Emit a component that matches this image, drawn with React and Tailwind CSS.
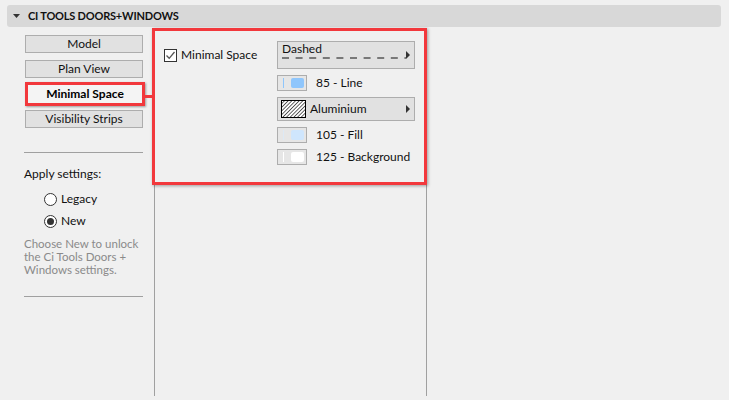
import React from 'react';

const font = { fontFamily: 'Lato, "Open Sans", Arial, sans-serif' };

const SideButton = ({ label, active }) =>
  active ? (
    <div className="h-[24px] w-[120px] -my-[3px] border-[3px] border-[#f2383c] bg-[#f4f4f4] shadow-[1px_1px_2px_rgba(0,0,0,0.35)] flex items-center justify-center text-[12px] font-bold text-black">
      {label}
    </div>
  ) : (
    <div className="h-[18px] w-[118px] border border-[#adadad] bg-[#e1e1e1] flex items-center justify-center text-[12px] text-[#111]">
      {label}
    </div>
  );

const Radio = ({ label, checked }) => (
  <div className="flex items-center h-[22px] pl-[44px]">
    <div className="w-[13px] h-[13px] rounded-full border border-[#333] bg-white flex items-center justify-center">
      {checked && <div className="w-[7px] h-[7px] rounded-full bg-[#333]" />}
    </div>
    <span className="ml-[4px] text-[12px] text-[#111]">{label}</span>
  </div>
);

const Swatch = ({ color, line, label }) => (
  <div className="flex items-center h-[16px]">
    <div className="w-[30px] h-[16px] border border-[#adadad] bg-[#e6e6e6] flex items-center">
      <div className="ml-[5px] w-[1px] h-[10px]" style={{ background: line }} />
      <div className="ml-[7px] w-[13px] h-[10px] rounded-[2px]" style={{ background: color }} />
    </div>
    <span className="ml-[9px] text-[12px] text-[#111]">{label}</span>
  </div>
);

const Arrow = () => (
  <svg width="4" height="8" viewBox="0 0 4 8" className="shrink-0">
    <path d="M0 0 L4 4 L0 8 Z" fill="#333" />
  </svg>
);

export default function App() {
  return (
    <div className="relative w-[729px] h-[400px] bg-[#f0f0f0] overflow-hidden" style={font}>
      {/* header */}
      <div className="ml-[7px] mt-[5px] w-[714px] h-[22px] rounded-[3px] bg-[#d8d8d8] flex items-center">
        <svg width="7" height="4" viewBox="0 0 7 4" className="ml-[6px]">
          <path d="M0 0 L7 0 L3.5 4 Z" fill="#333" />
        </svg>
        <span className="ml-[8px] text-[11px] tracking-[-0.2px] font-bold text-[#111]">CI TOOLS DOORS+WINDOWS</span>
      </div>

      <div className="flex mt-[5px] h-[364px]">
        {/* left column */}
        <div className="w-[154px] pt-[3px] pl-[25px] flex flex-col">
          <div className="flex flex-col gap-[7px]">
            <SideButton label="Model" />
            <SideButton label="Plan View" />
            <SideButton label="Minimal Space" active />
            <SideButton label="Visibility Strips" />
          </div>
          <div className="mt-[24px] -ml-[1px] w-[119px] h-[1px] bg-[#a0a0a0]" />
          <div className="mt-[13px] -ml-[1px] text-[12px] text-[#111] leading-[16px]">Apply settings:</div>
          <div className="mt-[6px] -ml-[25px]">
            <Radio label="Legacy" />
            <Radio label="New" checked />
          </div>
          <div className="mt-[5px] -ml-[1px] text-[11.5px] leading-[13px] text-[#8a8a8a]">
            <div>Choose New to unlock</div>
            <div>the Ci Tools Doors +</div>
            <div>Windows settings.</div>
          </div>
          <div className="mt-[20px] -ml-[1px] w-[119px] h-[1px] bg-[#a0a0a0]" />
        </div>

        {/* middle column */}
        <div className="w-[273px] border-x border-[#a0a0a0] flex pl-[9px] pt-[9px]">
          <div className="w-[113px] pt-[5px]">
            <div className="flex items-center">
              <div className="w-[13px] h-[13px] border border-[#333] bg-white flex items-center justify-center">
                <svg width="11" height="11" viewBox="0 0 11 11">
                  <path d="M1.5 5.5 L4.2 8.3 L9.5 2" fill="none" stroke="#555" strokeWidth="1.3" />
                </svg>
              </div>
              <span className="ml-[4px] text-[12px] text-[#111]">Minimal Space</span>
            </div>
          </div>
          <div className="w-[138px] flex flex-col gap-[6px]">
            <div className="h-[28px] border border-[#adadad] bg-[#e1e1e1] flex items-start pr-[4px]">
              <div className="flex-1 pl-[4px]">
                <div className="text-[12px] leading-[14px] text-[#111]">Dashed</div>
                <svg width="124" height="3" viewBox="0 0 124 3" className="mt-[1px] block">
                  <line x1="0" y1="1" x2="124" y2="1" stroke="#111" strokeWidth="1.2" strokeDasharray="7 6.6" />
                </svg>
              </div>
              <div className="self-center">
                <Arrow />
              </div>
            </div>
            <Swatch color="#8fc6fc" line="#8fc6fc" label="85 - Line" />
            <div className="h-[24px] border border-[#adadad] bg-[#e1e1e1] flex items-center pl-[3px] pr-[4px]">
              <svg width="25" height="18" viewBox="0 0 25 18" className="shrink-0">
                <defs>
                  <pattern id="hatch" width="2.6" height="2.6" patternUnits="userSpaceOnUse" patternTransform="rotate(45)">
                    <line x1="0" y1="0" x2="0" y2="2.6" stroke="#000" strokeWidth="1.2" />
                  </pattern>
                </defs>
                <rect x="0" y="0" width="25" height="18" fill="#fff" />
                <rect x="0" y="0" width="25" height="18" fill="url(#hatch)" />
                <rect x="0.5" y="0.5" width="24" height="17" fill="none" stroke="#000" />
              </svg>
              <span className="ml-[4px] flex-1 text-[12px] text-[#111]">Aluminium</span>
              <Arrow />
            </div>
            <Swatch color="#cfe6fd" line="#dde9f5" label="105 - Fill" />
            <Swatch color="#ffffff" line="#ffffff" label="125 - Background" />
          </div>
        </div>
      </div>

      {/* annotation overlay */}
      <div className="absolute left-[152px] top-[28px] w-[275px] h-[157px] border-[3px] border-[#f2383c] shadow-[1px_1px_3px_rgba(0,0,0,0.35)]" />
      <div className="absolute left-[145px] top-[95px] w-[8px] h-[3px] bg-[#f2383c]" />
    </div>
  );
}
